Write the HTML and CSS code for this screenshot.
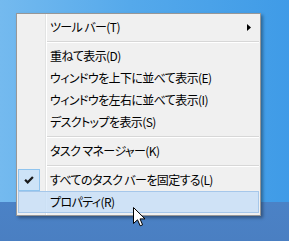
FILE: index.html
```html
<!DOCTYPE html>
<html lang="ja">
<head>
  <meta charset="UTF-8">
  <meta name="viewport" content="width=device-width, initial-scale=1.0">
  <title>タスク バー メニュー</title>
  <link rel="stylesheet" href="styles.css">
</head>
<body>
<div class="desktop">
  <div class="menu">
    <div class="item">
      <span class="icon"></span>
      <span class="label">ツール バー(T)</span>
      <svg class="arrow" width="4" height="7" viewBox="0 0 4 7"><path d="M0 0 L4 3.5 L0 7 Z" fill="#000"/></svg>
    </div>
    <div class="sep"></div>
    <div class="item"><span class="icon"></span><span class="label">重ねて表示(D)</span></div>
    <div class="item"><span class="icon"></span><span class="label">ウィンドウを上下に並べて表示(E)</span></div>
    <div class="item"><span class="icon"></span><span class="label">ウィンドウを左右に並べて表示(I)</span></div>
    <div class="item"><span class="icon"></span><span class="label">デスクトップを表示(S)</span></div>
    <div class="sep"></div>
    <div class="item"><span class="icon"></span><span class="label">タスク マネージャー(K)</span></div>
    <div class="sep"></div>
    <div class="item">
      <span class="icon checked">
        <svg width="10" height="9" viewBox="0 0 10 9"><path d="M0.3 4.6 L3.7 8 L9.7 1.8 L8.1 0.3 L3.7 4.8 L1.9 3 Z" fill="#1a1a1a"/></svg>
      </span>
      <span class="label">すべてのタスク バーを固定する(L)</span>
    </div>
    <div class="item active"><span class="icon"></span><span class="label">プロパティ(R)</span></div>
  </div>

  <svg class="cursor" width="13" height="20" viewBox="0 0 13 20">
    <path d="M0.5 0.5 L0.5 16.5 L4.5 12.8 L7.2 18.8 L9.6 17.8 L7 11.9 L12 11.9 Z" fill="#fff" stroke="#000" stroke-width="1" stroke-linejoin="miter"/>
  </svg>
</div>
</body>
</html>
```

FILE: styles.css
```css
body {
  margin: 0;
  font-family: "Noto Sans CJK JP", "Noto Sans", sans-serif;
}
.desktop {
  position: relative;
  height: 241px;
  padding: 13px 0 0 16px;
  box-sizing: border-box;
  background:
    linear-gradient(to bottom, transparent 202px, #4b82c6 202px, #4a7fc2 100%),
    linear-gradient(to right, #74baef, #55a9eb 45%, #3f9be7 100%);
  overflow: hidden;
}
.menu {
  width: 245px;
  box-sizing: border-box;
  padding: 2px 1px;
  border: 1px solid #979797;
  background:
    linear-gradient(to right, transparent 28px, #e2e3e3 28px, #e2e3e3 29px, #fff 29px, #fff 30px, transparent 30px),
    #f0f0f0;
  box-shadow: 2px 2px 3px rgba(0,0,0,0.35);
}
.item {
  display: flex;
  align-items: center;
  height: 22px;
  box-sizing: border-box;
  font-size: 12px;
  font-feature-settings: "palt";
  letter-spacing: -0.6px;
  color: #000;
}
.icon {
  width: 22px;
  height: 22px;
  margin-right: 10px;
  box-sizing: border-box;
  display: flex;
  align-items: center;
  justify-content: center;
}
.icon.checked {
  background: #cde3f7;
  border: 1px solid #90c4ee;
}
.label {
  flex: 1;
  white-space: nowrap;
  line-height: 22px;
}
.arrow {
  margin-right: 8px;
}
.active {
  background: rgba(199, 223, 248, 0.8);
  border: 1px solid #a6c7ea;
}
.active .icon {
  margin-left: -1px;
}
.sep {
  height: 7px;
  margin-left: 29px;
  padding-top: 3px;
  box-sizing: border-box;
}
.sep::after {
  content: "";
  display: block;
  height: 1px;
  background: #d7d7d7;
  border-bottom: 1px solid #fff;
}
.cursor {
  position: absolute;
  left: 133px;
  top: 207px;
}
```
